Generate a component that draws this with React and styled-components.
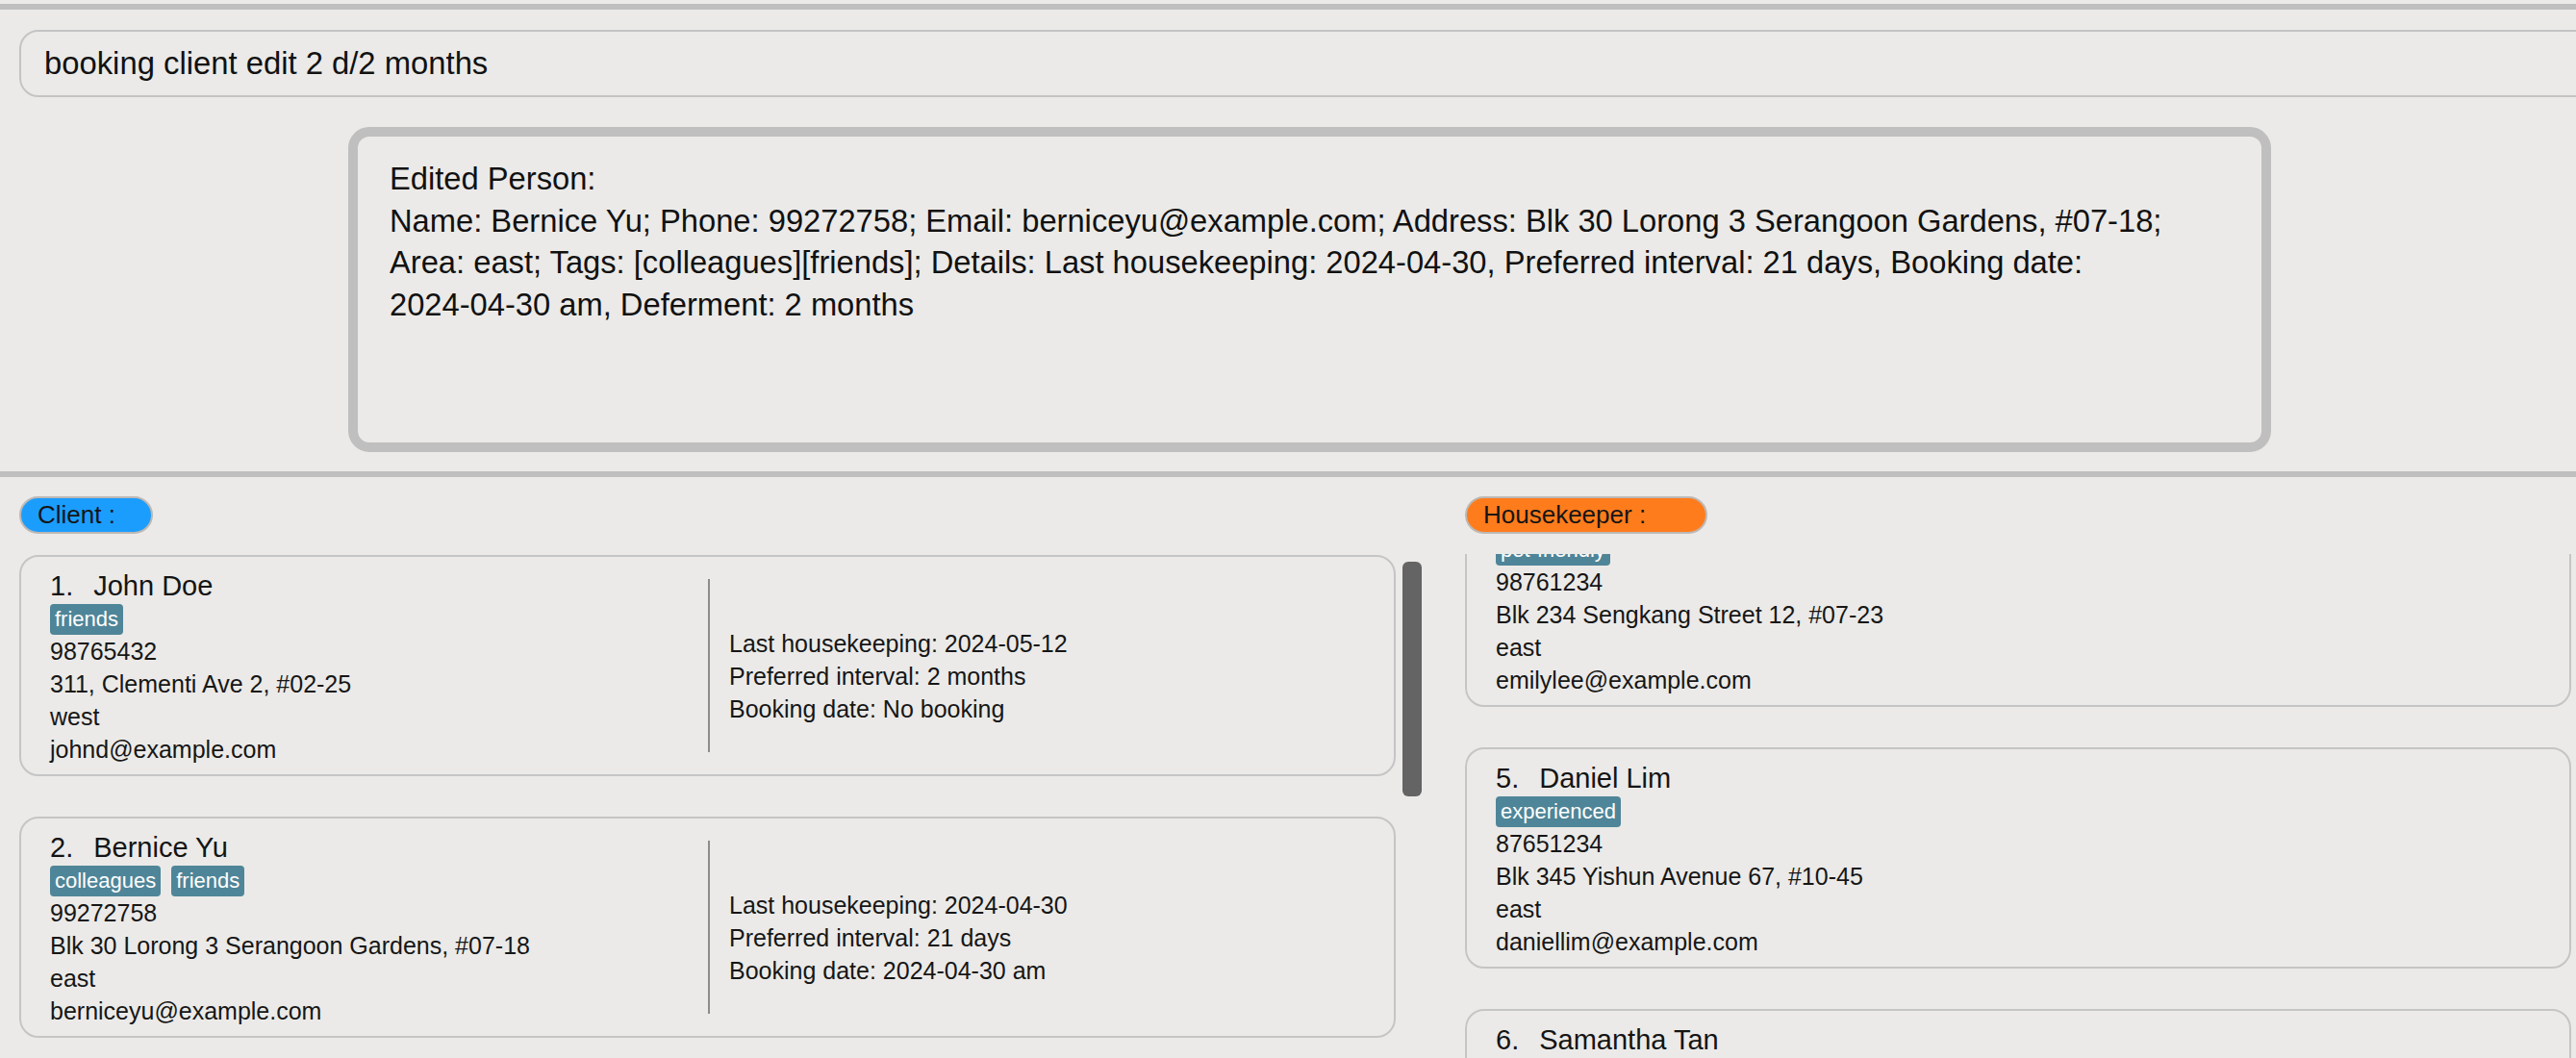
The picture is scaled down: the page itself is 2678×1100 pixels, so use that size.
import React, { useLayoutEffect, useRef } from 'react';
import styled, { createGlobalStyle } from 'styled-components';

const GlobalStyle = createGlobalStyle`
  html, body {
    margin: 0;
    padding: 0;
    background: #ebeae8;
    overflow: hidden;
  }
  body {
    font-family: "Liberation Sans", Arial, sans-serif;
    color: #161616;
  }
`;

const Window = styled.div`
  height: 1100px;
  display: flex;
  flex-direction: column;
  background: #ebeae8;
`;

const Rule = styled.div`
  height: 6px;
  margin-top: ${(p) => p.$top}px;
  background: #bfbfbf;
  flex: 0 0 auto;
`;

const CommandBox = styled.div`
  flex: 0 0 auto;
  height: 70px;
  margin: 21px -40px 0 20px;
  box-sizing: border-box;
  border: 2px solid #c4c4c4;
  border-radius: 20px;
  display: flex;
  align-items: center;
  padding-left: 24px;
  font-size: 32.8px;
  color: #111;
`;

const ResultBox = styled.div`
  flex: 0 0 auto;
  width: 1999px;
  height: 338px;
  margin: 31px 0 0 362px;
  box-sizing: border-box;
  border: 10px solid #bfbfbf;
  border-radius: 22px;
  padding: 22px 30px 0 33px;
  font-size: 32.7px;
  line-height: 43.7px;
  color: #111;
  white-space: nowrap;
`;

const Lower = styled.div`
  flex: 1;
  min-height: 0;
  display: flex;
  gap: 45px;
  padding: 20px 0 0 20px;
`;

const Pane = styled.div`
  display: flex;
  flex-direction: column;
  min-height: 0;
  width: ${(p) => p.$width}px;
  flex: 0 0 auto;
`;

const Pill = styled.div`
  width: ${(p) => p.$width}px;
  height: 39px;
  box-sizing: border-box;
  border: 2px solid #bdb8b4;
  border-radius: 20px;
  background: ${(p) => p.$color};
  display: flex;
  align-items: center;
  padding-left: 17px;
  font-size: 26px;
  color: #151515;
  margin-bottom: 21px;
`;

const ListArea = styled.div`
  flex: 1;
  min-height: 0;
  display: flex;
  gap: 7px;
`;

const List = styled.div`
  flex: 1;
  min-height: 0;
  overflow: hidden;
  padding: 1px 0 20px 0;
  box-sizing: border-box;
`;

const ScrollTrack = styled.div`
  width: 20px;
  flex: 0 0 auto;
  padding-top: 8px;
`;

const ScrollThumb = styled.div`
  height: 244px;
  border-radius: 6px;
  background: #646464;
`;

const Card = styled.div`
  width: ${(p) => p.$width}px;
  height: 230px;
  box-sizing: border-box;
  border: 2px solid #c5c5c5;
  border-radius: 20px;
  padding: 12px 0 0 30px;
  margin-bottom: 42px;
  display: flex;
  align-items: stretch;
`;

const Info = styled.div`
  width: ${(p) => (p.$fixed ? '684px' : 'auto')};
  flex: 0 0 auto;
`;

const NameRow = styled.div`
  font-size: 29px;
  line-height: 37px;
  color: #141414;
  white-space: nowrap;
`;

const Index = styled.span`
  margin-right: 21px;
`;

const Tags = styled.div`
  display: flex;
  gap: 11px;
  height: 32px;
`;

const Tag = styled.span`
  height: 32px;
  line-height: 32px;
  padding: 0 5px;
  border-radius: 4px;
  background: #4f8598;
  color: #fff;
  font-size: 22px;
`;

const Line = styled.div`
  font-size: 25px;
  line-height: 34px;
  color: #161616;
  white-space: nowrap;
`;

const Separator = styled.div`
  width: 2px;
  height: 180px;
  align-self: center;
  margin-top: -12px;
  background: #8c8c8c;
  flex: 0 0 auto;
`;

const Details = styled.div`
  padding: 61px 0 0 20px;
`;

const clients = [
  {
    name: 'John Doe',
    tags: ['friends'],
    phone: '98765432',
    address: '311, Clementi Ave 2, #02-25',
    area: 'west',
    email: 'johnd@example.com',
    last: '2024-05-12',
    interval: '2 months',
    booking: 'No booking',
  },
  {
    name: 'Bernice Yu',
    tags: ['colleagues', 'friends'],
    phone: '99272758',
    address: 'Blk 30 Lorong 3 Serangoon Gardens, #07-18',
    area: 'east',
    email: 'berniceyu@example.com',
    last: '2024-04-30',
    interval: '21 days',
    booking: '2024-04-30 am',
  },
  {
    name: 'Charlotte Oliveiro',
    tags: ['neighbours'],
    phone: '93210283',
    address: 'Blk 11 Ang Mo Kio Street 74, #11-04',
    area: 'north',
    email: 'charlotte@example.com',
    last: '2024-03-15',
    interval: '1 month',
    booking: 'No booking',
  },
];

const housekeepers = [
  {
    name: 'Alice Tan',
    tags: ['reliable'],
    phone: '91234567',
    address: 'Blk 12 Tampines Street 11, #03-12',
    area: 'east',
    email: 'alicetan@example.com',
  },
  {
    name: 'Bryan Ng',
    tags: ['experienced'],
    phone: '92345678',
    address: 'Blk 56 Jurong West Street 41, #05-30',
    area: 'west',
    email: 'bryanng@example.com',
  },
  {
    name: 'Chloe Wong',
    tags: ['pet-friendly'],
    phone: '93456789',
    address: 'Blk 78 Woodlands Avenue 3, #08-15',
    area: 'north',
    email: 'chloewong@example.com',
  },
  {
    name: 'Emily Lee',
    tags: ['pet-friendly'],
    phone: '98761234',
    address: 'Blk 234 Sengkang Street 12, #07-23',
    area: 'east',
    email: 'emilylee@example.com',
  },
  {
    name: 'Daniel Lim',
    tags: ['experienced'],
    phone: '87651234',
    address: 'Blk 345 Yishun Avenue 67, #10-45',
    area: 'east',
    email: 'daniellim@example.com',
  },
  {
    name: 'Samantha Tan',
    tags: ['reliable'],
    phone: '96543218',
    address: 'Blk 890 Bedok North Road, #04-11',
    area: 'east',
    email: 'samanthatan@example.com',
  },
];

const resultLines = [
  'Edited Person:',
  'Name: Bernice Yu; Phone: 99272758; Email: berniceyu@example.com; Address: Blk 30 Lorong 3 Serangoon Gardens, #07-18;',
  'Area: east; Tags: [colleagues][friends]; Details: Last housekeeping: 2024-04-30, Preferred interval: 21 days, Booking date:',
  '2024-04-30 am, Deferment: 2 months',
];

const PersonInfo = ({ person, index, fixed }) => (
  <Info $fixed={fixed}>
    <NameRow>
      <Index>{index}.</Index>
      {person.name}
    </NameRow>
    <Tags>
      {person.tags.map((t) => (
        <Tag key={t}>{t}</Tag>
      ))}
    </Tags>
    <Line>{person.phone}</Line>
    <Line>{person.address}</Line>
    <Line>{person.area}</Line>
    <Line>{person.email}</Line>
  </Info>
);

const App = () => {
  const rightList = useRef(null);

  useLayoutEffect(() => {
    // housekeeper list is scrolled down to Emily Lee
    if (rightList.current) rightList.current.scrollTop = 888;
  }, []);

  return (
    <Window>
      <GlobalStyle />
      <Rule $top={4} />
      <CommandBox>booking client edit 2 d/2 months</CommandBox>
      <ResultBox>
        {resultLines.map((l, i) => (
          <div key={i}>{l}</div>
        ))}
      </ResultBox>
      <Rule $top={20} />
      <Lower>
        <Pane $width={1458}>
          <Pill $color="#1b9dfd" $width={139}>
            Client :
          </Pill>
          <ListArea>
            <List>
              {clients.map((c, i) => (
                <Card key={c.name} $width={1431}>
                  <PersonInfo person={c} index={i + 1} fixed />
                  <Separator />
                  <Details>
                    <Line>Last housekeeping: {c.last}</Line>
                    <Line>Preferred interval: {c.interval}</Line>
                    <Line>Booking date: {c.booking}</Line>
                  </Details>
                </Card>
              ))}
            </List>
            <ScrollTrack>
              <ScrollThumb />
            </ScrollTrack>
          </ListArea>
        </Pane>
        <Pane $width={1160}>
          <Pill $color="#ff7c1c" $width={252}>
            Housekeeper :
          </Pill>
          <List ref={rightList}>
            {housekeepers.map((h, i) => (
              <Card key={h.name} $width={1150}>
                <PersonInfo person={h} index={i + 1} />
              </Card>
            ))}
          </List>
        </Pane>
      </Lower>
    </Window>
  );
};

export default App;
